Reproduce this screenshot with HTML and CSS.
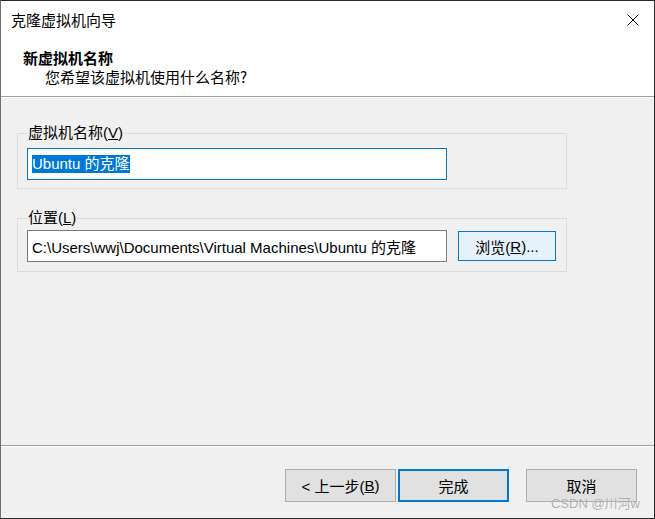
FILE: index.html
```html
<!DOCTYPE html>
<html lang="zh-CN">
<head>
<meta charset="utf-8">
<title>克隆虚拟机向导</title>
<link rel="stylesheet" href="styles.css">
</head>
<body>
<div class="window">
  <div class="header">
    <div class="titlebar">
      <span class="title">克隆虚拟机向导</span>
      <svg class="close" width="12" height="12" viewBox="0 0 12 12"><path d="M0.5 0.5 L11.5 11.5 M11.5 0.5 L0.5 11.5" stroke="#000" stroke-width="1" fill="none"/></svg>
    </div>
    <div class="heading">
      <div class="h-main">新虚拟机名称</div>
      <div class="h-sub">您希望该虚拟机使用什么名称?</div>
    </div>
  </div>
  <div class="sep"></div>
  <div class="content">
    <fieldset class="group g1">
      <legend>虚拟机名称(<u>V</u>)</legend>
      <div class="row">
        <div class="input focused"><span class="sel">Ubuntu 的克隆</span></div>
      </div>
    </fieldset>
    <fieldset class="group g2">
      <legend>位置(<u>L</u>)</legend>
      <div class="row">
        <div class="input">C:\Users\wwj\Documents\Virtual Machines\Ubuntu 的克隆</div>
        <div class="btn browse">浏览(<u>R</u>)...</div>
      </div>
    </fieldset>
  </div>
  <div class="sep"></div>
  <div class="footer">
    <div class="btn wide">&lt; 上一步(<u>B</u>)</div>
    <div class="btn wide default">完成</div>
    <div class="btn wide cancel">取消</div>
  </div>
  <div class="watermark">CSDN @川河w</div>
</div>
</body>
</html>
```

FILE: styles.css
```css
html, body {
  margin: 0;
  padding: 0;
  background: #f0f0f0;
}
body {
  font-family: "Liberation Sans", "Noto Sans CJK SC", sans-serif;
  font-size: 15px;
  color: #000;
}
.window {
  position: relative;
  box-sizing: border-box;
  width: 655px;
  height: 519px;
  border: 1px solid #2b2b2b;
  border-left-color: #6f6f6f;
  display: flex;
  flex-direction: column;
  background: #f0f0f0;
}
.header {
  background: #fff;
  height: 95px;
  display: flex;
  flex-direction: column;
}
.titlebar {
  height: 38px;
  display: flex;
  align-items: center;
  justify-content: space-between;
  padding: 0 15px 0 10px;
}
.title {
  font-family: "Noto Sans CJK SC", sans-serif;
  font-size: 15px;
  line-height: 20px;
}
.close { display: block; }
.heading {
  padding: 10px 0 0 22px;
  font-family: "Noto Sans CJK SC", sans-serif;
  font-size: 15px;
}
.h-main {
  font-weight: bold;
  line-height: 18px;
}
.h-sub {
  padding-left: 22px;
  line-height: 20px;
}
.sep {
  height: 1px;
  background: #a0a0a0;
  border-bottom: 1px solid #fff;
}
.content {
  flex: 1;
  padding: 25px 87px 0 16px;
  display: flex;
  flex-direction: column;
}
.group {
  margin: 0;
  border: 1px solid #dcdcdc;
  padding: 0 9px 8px 9px;
  min-width: 0;
}
.group legend {
  padding: 0 1px;
  line-height: 20px;
}
.g1 .row { margin-top: 5px; }
.g2 { margin-top: 19px; }
.g2 .row { margin-top: 2px; padding-bottom: 1px; }
.row {
  display: flex;
  align-items: center;
  gap: 11px;
}
.input {
  box-sizing: border-box;
  width: 420px;
  height: 32px;
  border: 1px solid #7a7a7a;
  background: #fff;
  padding: 0 4px;
  display: flex;
  align-items: center;
  white-space: nowrap;
  overflow: hidden;
}
.input.focused { border-color: #0078d7; }
.sel {
  background: #0078d7;
  color: #fff;
  line-height: 18px;
}
.btn {
  box-sizing: border-box;
  border: 1px solid #adadad;
  background: #e1e1e1;
  display: flex;
  align-items: center;
  justify-content: center;
}
.browse {
  width: 98px;
  height: 30px;
  border-color: #0078d7;
  background: #e5f1fb;
}
.footer {
  height: 71px;
  display: flex;
  justify-content: flex-end;
  padding: 22px 17px 0 0;
  box-sizing: border-box;
  gap: 2px;
}
.wide {
  width: 111px;
  height: 33px;
}
.default {
  border: 2px solid #0078d7;
}
.cancel { margin-left: 15px; }
.watermark {
  position: absolute;
  right: 14px;
  bottom: 6px;
  font-size: 13px;
  color: rgba(150,150,150,0.75);
  text-shadow: 0 0 1px rgba(255,255,255,0.6);
}
```
